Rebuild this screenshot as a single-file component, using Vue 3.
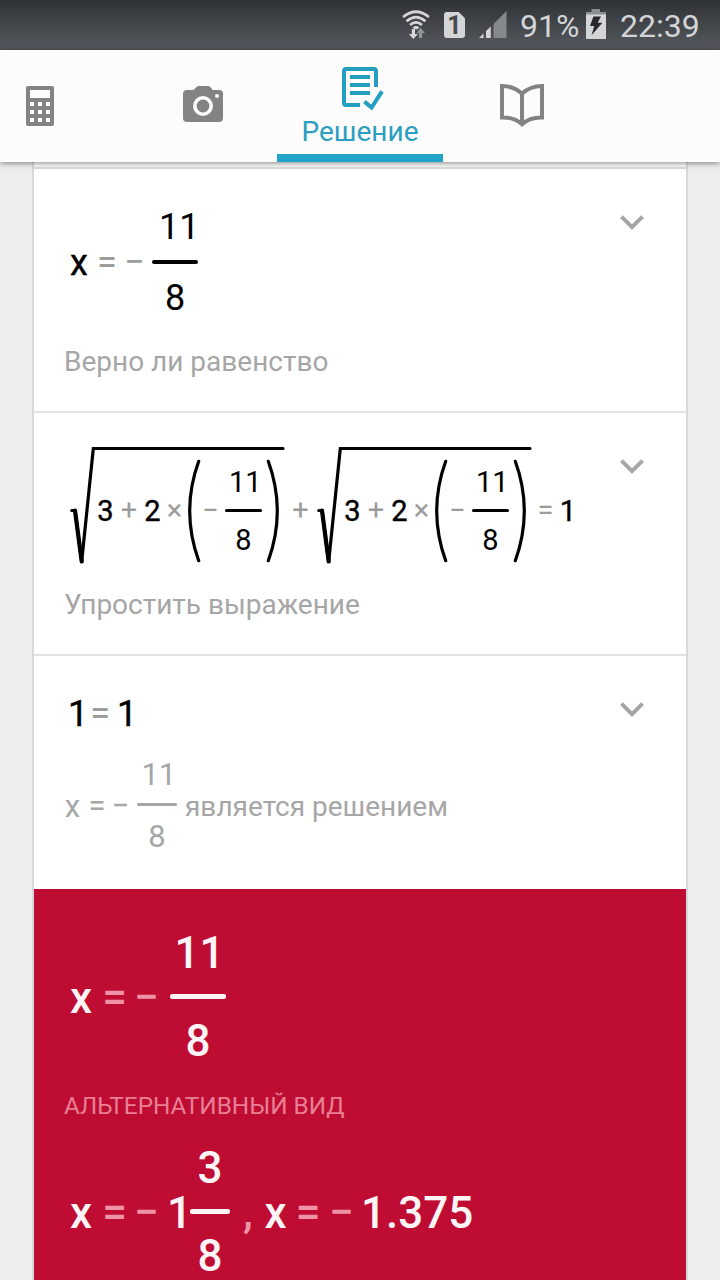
<template>
  <div class="screen">
    <!-- status bar -->
    <div class="status">
      <svg class="wifi" width="28" height="30" viewBox="0 0 28 30">
        <g fill="none" stroke="#d3d5d7" stroke-width="2.8">
          <path d="M1 7 Q14 -3.5 27 7" />
          <path d="M4.6 11.2 Q14 3 23.4 11.2" />
          <path d="M8 15 Q14 9.8 20 15" />
        </g>
        <path d="M10.6 17.4 Q14 14.6 17.4 17.4 L15.4 19.2 H12.6 Z" fill="#d3d5d7" />
        <path d="M9.8 19 h3.2 v5 h3 L11.4 29 L6.8 24 h3 Z" fill="#d3d5d7" />
        <path d="M17 28 h3.2 v-5 h2.8 L18.6 17.8 L14.4 23 h2.6 Z" fill="#929599" />
      </svg>
      <div class="sim">1</div>
      <svg class="signal" width="28" height="28" viewBox="0 0 28 28">
        <path d="M27.5 0 V27 H14.5 V13 Z" fill="#85888c" />
        <path d="M0 27 L4.5 22.5 V27 Z M7 27 V20 L11.8 15.5 V27 Z" fill="#d3d5d7" />
      </svg>
      <span class="percent">91%</span>
      <svg class="battery" width="20" height="30" viewBox="0 0 20 30">
        <path d="M5.5 0 H14 V3 H20 V6.5 H0 V3 H5.5 Z" fill="#8b8e91" />
        <rect y="5.5" width="20" height="24.5" fill="#d3d5d7" />
        <path d="M7.4 7.5 H15 L11.6 13.8 H16.4 L5.6 26.2 L8.2 17 H4 Z" fill="#26282a" />
      </svg>
      <span class="clock">22:39</span>
    </div>

    <!-- tabs -->
    <nav class="tabs">
      <div class="tab calc">
        <svg width="28" height="40" viewBox="0 0 28 40">
          <rect width="28" height="40" rx="2" fill="#838383" />
          <rect x="4" y="4" width="20" height="8" fill="#fcfcfc" />
          <template v-for="row in 3" :key="row">
            <rect
              v-for="col in 3"
              :key="col"
              :x="col * 8 - 4"
              :y="row * 8 + 8"
              width="4"
              height="4"
              fill="#fcfcfc"
            />
          </template>
        </svg>
      </div>
      <div class="tab camera">
        <svg width="40" height="36" viewBox="0 0 40 36">
          <path d="M4 4 H10.5 L13.5 1 Q14.5 0 16 0 H25 Q26.5 0 27.3 1 L29.8 4 H36 Q40 4 40 8 V32 Q40 36 36 36 H4 Q0 36 0 32 V8 Q0 4 4 4 Z" fill="#838383" />
          <circle cx="20" cy="20" r="8.2" fill="none" stroke="#fcfcfc" stroke-width="3.6" />
          <circle cx="34" cy="10" r="2" fill="#fcfcfc" />
        </svg>
      </div>
      <div class="tab solution active">
        <svg width="42" height="44" viewBox="0 0 42 44">
          <g fill="none" stroke="#239fc2" stroke-width="4">
            <path d="M18 38 H4 Q2 38 2 36 V4 Q2 2 4 2 H32 Q34 2 34 4 V20" />
            <path d="M8 10 H28 M8 18 H28 M8 26 H28" />
            <path d="M22.4 34.6 L29.6 40.6 L40 24.4" />
          </g>
        </svg>
        <span>Решение</span>
      </div>
      <div class="tab book">
        <svg width="44" height="44" viewBox="0 0 44 44">
          <g fill="none" stroke="#838383" stroke-width="4">
            <path d="M2 3 Q14 3.2 22 10.6 Q30 3.2 42 3 V34.4 Q30 34 22 41.2 Q14 34 2 34.4 Z" />
            <path d="M22 9 V41" />
          </g>
        </svg>
      </div>
    </nav>

    <!-- solution steps -->
    <main class="card">
      <section class="step first">
        <div class="body">
          <div class="math m-first">
            <b>x</b><i>=</i><i>−</i>
            <div class="frac"><span class="num">11</span><hr><span>8</span></div>
          </div>
          <p>Верно ли равенство</p>
        </div>
        <svg class="chevron" width="24" height="16" viewBox="0 0 24 16"><path d="M1.5 1.7 L12 12.2 L22.5 1.7" /></svg>
      </section>

      <section class="step second">
        <div class="body">
          <div class="math m-check">
            <template v-for="n in 2" :key="n">
              <i v-if="n === 2" class="plus">+</i>
              <div class="root">
                <svg class="radical" width="216" height="120" viewBox="0 0 216 120">
                  <path d="M1.8 64.5 H5 L11.7 115.5 L23.3 2.5 H213" />
                  <path d="M5 64.5 L11.7 115.5" class="thick" />
                </svg>
                <b>3</b><i>+</i><b>2</b><i>×</i>
                <svg class="paren" width="14" height="106" viewBox="0 0 14 106"><path d="M10.7 3.3 Q-7.3 53 10.7 102.7" /></svg>
                <i>−</i>
                <div class="frac"><span class="num">11</span><hr><span>8</span></div>
                <svg class="paren" width="14" height="106" viewBox="0 0 14 106"><path d="M2.3 3.3 Q20.3 53 2.3 102.7" /></svg>
              </div>
            </template>
            <i class="eq">=</i><b>1</b>
          </div>
          <p>Упростить выражение</p>
        </div>
        <svg class="chevron" width="24" height="16" viewBox="0 0 24 16"><path d="M1.5 1.7 L12 12.2 L22.5 1.7" /></svg>
      </section>

      <section class="step third">
        <div class="body">
          <div class="math m-equal"><b>1</b><i>=</i><b>1</b></div>
          <div class="math m-note">
            <span>x</span><i>=</i><i>−</i>
            <div class="frac"><span class="num">11</span><hr><span>8</span></div>
            <span class="words">является решением</span>
          </div>
        </div>
        <svg class="chevron" width="24" height="16" viewBox="0 0 24 16"><path d="M1.5 1.7 L12 12.2 L22.5 1.7" /></svg>
      </section>

      <section class="result">
        <div class="math m-result">
          <b>x</b><i>=</i><i>−</i>
          <div class="frac"><span class="num">11</span><hr><span>8</span></div>
        </div>
        <h2>АЛЬТЕРНАТИВНЫЙ ВИД</h2>
        <div class="math m-alt">
          <b>x</b><i>=</i><i>−</i><b>1</b>
          <div class="frac"><span>3</span><hr><span>8</span></div>
          <i>,</i><b>x</b><i>=</i><i>−</i><b class="decimal">1.375</b>
        </div>
      </section>
    </main>
  </div>
</template>

<script setup>
</script>

<style>
body {
  margin: 0;
  background: #eeeeee;
}
</style>

<style scoped>
.screen {
  width: 720px;
  height: 1280px;
  overflow: hidden;
  display: flex;
  flex-direction: column;
  background: #eeeeee;
  font-family: Roboto, "Noto Sans", sans-serif;
}

svg {
  display: block;
  flex: none;
}

/* status bar */
.status {
  box-sizing: border-box;
  flex: none;
  height: 50px;
  padding-left: 402px;
  display: flex;
  align-items: center;
  background: linear-gradient(#2f3235, #56595f);
  color: #d3d5d7;
  font-size: 32px;
  line-height: 50px;
  white-space: nowrap;
}

.sim {
  width: 21px;
  height: 26px;
  margin-left: 14px;
  border-radius: 3px;
  background: #d3d5d7;
  clip-path: polygon(0 0, 70% 0, 100% 24%, 100% 100%, 0 100%);
  color: #45484c;
  font-size: 25px;
  font-weight: 700;
  line-height: 27px;
  text-align: center;
}

.signal {
  margin-left: 14px;
}

.percent {
  width: 66px;
  margin-left: 13px;
  padding-top: 1px;
}

.battery {
  margin-top: -2px;
}

.clock {
  margin-left: 14px;
  padding-top: 1px;
}

/* tabs */
.tabs {
  position: relative;
  z-index: 1;
  flex: none;
  height: 112px;
  display: grid;
  grid-template-columns: 129px 148px 166px 158px;
  background: #fcfcfc;
  box-shadow: 0 1px 6px rgba(0, 0, 0, 0.5);
}

.tab {
  box-sizing: border-box;
  height: 112px;
  display: flex;
  flex-direction: column;
}

.calc {
  padding: 36px 0 0 26px;
}

.camera {
  padding: 36px 0 0 54px;
}

.book {
  padding: 33px 0 0 57px;
}

.solution {
  padding-top: 17px;
  border-bottom: 8px solid #1fa3c9;
  color: #2b9fbf;
  font-size: 28px;
  line-height: 32px;
}

.solution svg {
  margin-left: 65px;
}

.solution span {
  margin-top: 5px;
  text-align: center;
}

/* steps */
.card {
  width: 652px;
  margin-left: 32px;
  border: solid #d9d9d9;
  border-width: 0 2px;
  background: #ffffff;
}

.step {
  box-sizing: border-box;
  display: flex;
  justify-content: space-between;
  padding: 0 42px 0 30px;
  border-bottom: 2px solid #e2e2e2;
}

.first {
  height: 246px;
  margin-top: 5px;
  padding-top: 40px;
  border-top: 2px solid #dcdcdc;
}

.second {
  height: 243px;
  padding-top: 33px;
}

.third {
  height: 233px;
  padding-top: 38px;
  border-bottom: 0;
}

.step p {
  margin: 0;
  color: #a6a6a6;
  font-size: 28px;
  line-height: 34px;
}

.chevron {
  margin-top: 6px;
  fill: none;
  stroke: #a6a6a6;
  stroke-width: 4;
}

.second .chevron {
  margin-top: 13px;
}

.third .chevron {
  margin-top: 8px;
}

/* formulas: one grid column per token */
.math {
  display: grid;
  align-items: center;
  justify-items: center;
  color: #000000;
  font-size: 36px;
  line-height: 1;
  white-space: nowrap;
}

.math b {
  padding-top: 2px;
  font-weight: 400;
  -webkit-text-stroke: 0.4px currentColor;
}

.math i {
  color: #9c9c9c;
  font-style: normal;
}

.frac {
  justify-self: end;
  display: flex;
  flex-direction: column;
  align-items: center;
}

.frac hr {
  box-sizing: border-box;
  width: 46px;
  height: 0.1em;
  margin: 0.43em 0;
  border: 0;
  border-radius: 2px;
  background: currentColor;
  color: inherit;
}

.num {
  padding-left: 0.12em;
}

.m-first {
  grid-template-columns: 30px 26px 29px 49px;
  margin-bottom: 29px;
}

.m-first .num {
  margin: 0 -2px 0 2px;
}

.m-check {
  grid-template-columns: 214px 33px 214px 29px 16px;
  height: 120px;
  margin-bottom: 22px;
  padding-left: 6px;
  font-size: 29px;
}

.m-check .frac {
  padding-top: 2px;
}

.m-check .frac hr {
  width: 37px;
  margin: 12px 0 14px;
}

.root {
  position: relative;
  box-sizing: border-box;
  display: grid;
  grid-template-columns: 17px 30px 17px 27px 13px 19px 42px 18px;
  align-items: center;
  justify-items: center;
  justify-self: start;
  width: 216px;
  height: 120px;
  padding: 9px 0 0 27px;
}

.radical {
  position: absolute;
  left: 0;
  top: 0;
}

.radical,
.paren {
  fill: none;
  stroke: #000000;
  stroke-width: 3.2;
  stroke-linecap: round;
}

.radical .thick {
  stroke-width: 4.2;
}

.paren:last-child {
  justify-self: end;
}

.plus,
.eq {
  padding-top: 9px;
}

.math .eq + b {
  padding-top: 11px;
}

.m-equal {
  grid-template-columns: 28px 16px 38px;
  margin-bottom: 27px;
}

.m-note {
  grid-template-columns: 17px 32px 15px 49px auto;
  width: max-content;
  color: #a6a6a6;
  font-size: 31px;
}

.m-note i {
  color: #a6a6a6;
}

.m-note .frac hr {
  width: 40px;
  margin-bottom: 15px;
}

.m-note > span {
  padding-top: 2px;
}

.words {
  margin-left: 8px;
  font-size: 28px;
}

/* result */
.result {
  height: 400px;
  padding: 42px 0 0 30px;
  background: #be0c33;
}

.result .math {
  color: #fff4f6;
  font-size: 44px;
  font-weight: 500;
}

.result .math b {
  padding-top: 3px;
  font-weight: 500;
  -webkit-text-stroke: 0;
}

.result .math i {
  color: #ef93a6;
}

.result .frac hr {
  height: 5px;
  margin-bottom: 20px;
}

.m-result {
  grid-template-columns: 34px 33px 31px 64px;
}

.m-result .num {
  padding-left: 3px;
}

.result h2 {
  margin: 27px 0 24px;
  color: #e87f94;
  font-size: 24.3px;
  font-weight: 400;
  line-height: 32px;
}

.m-result .frac hr {
  width: 56px;
}

.m-alt {
  grid-template-columns: 34px 33px 31px 35px 33px 36px 19px 46px 21px auto;
  width: max-content;
}

.m-alt .frac hr {
  width: 40px;
}

.result .math .decimal {
  margin-left: 9px;
}
</style>
